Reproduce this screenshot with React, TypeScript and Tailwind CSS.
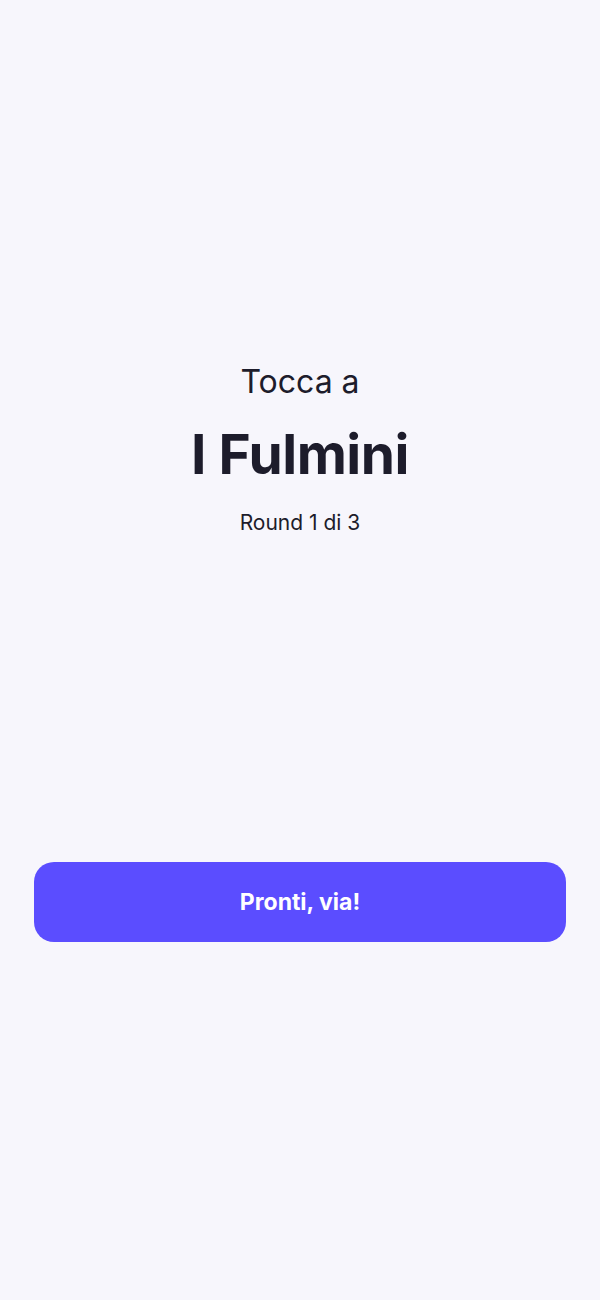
export default function App() {
    return (
        <div
            className="min-h-[1300px] bg-[#f7f6fc] flex flex-col items-center text-[#1d1c2b]"
            style={{ fontFamily: 'Inter, "Noto Sans", sans-serif' }}
        >
            {/* Turn header */}
            <div className="flex flex-col items-center pt-[362px]">
                <p className="text-[32px] leading-[40px] font-normal">Tocca a</p>
                <h1 className="mt-[22px] text-[55px] leading-[60px] font-bold tracking-[-0.5px]">I Fulmini</h1>
                <p className="mt-[25px] text-[21px] leading-[28px]">Round 1 di 3</p>
            </div>

            {/* Start button */}
            <div className="w-full px-[34px] mt-[325px]">
                <button className="w-full h-[80px] rounded-[20px] bg-[#5b4dff] text-white text-[23px] font-bold">
                    Pronti, via!
                </button>
            </div>
        </div>
    )
}
